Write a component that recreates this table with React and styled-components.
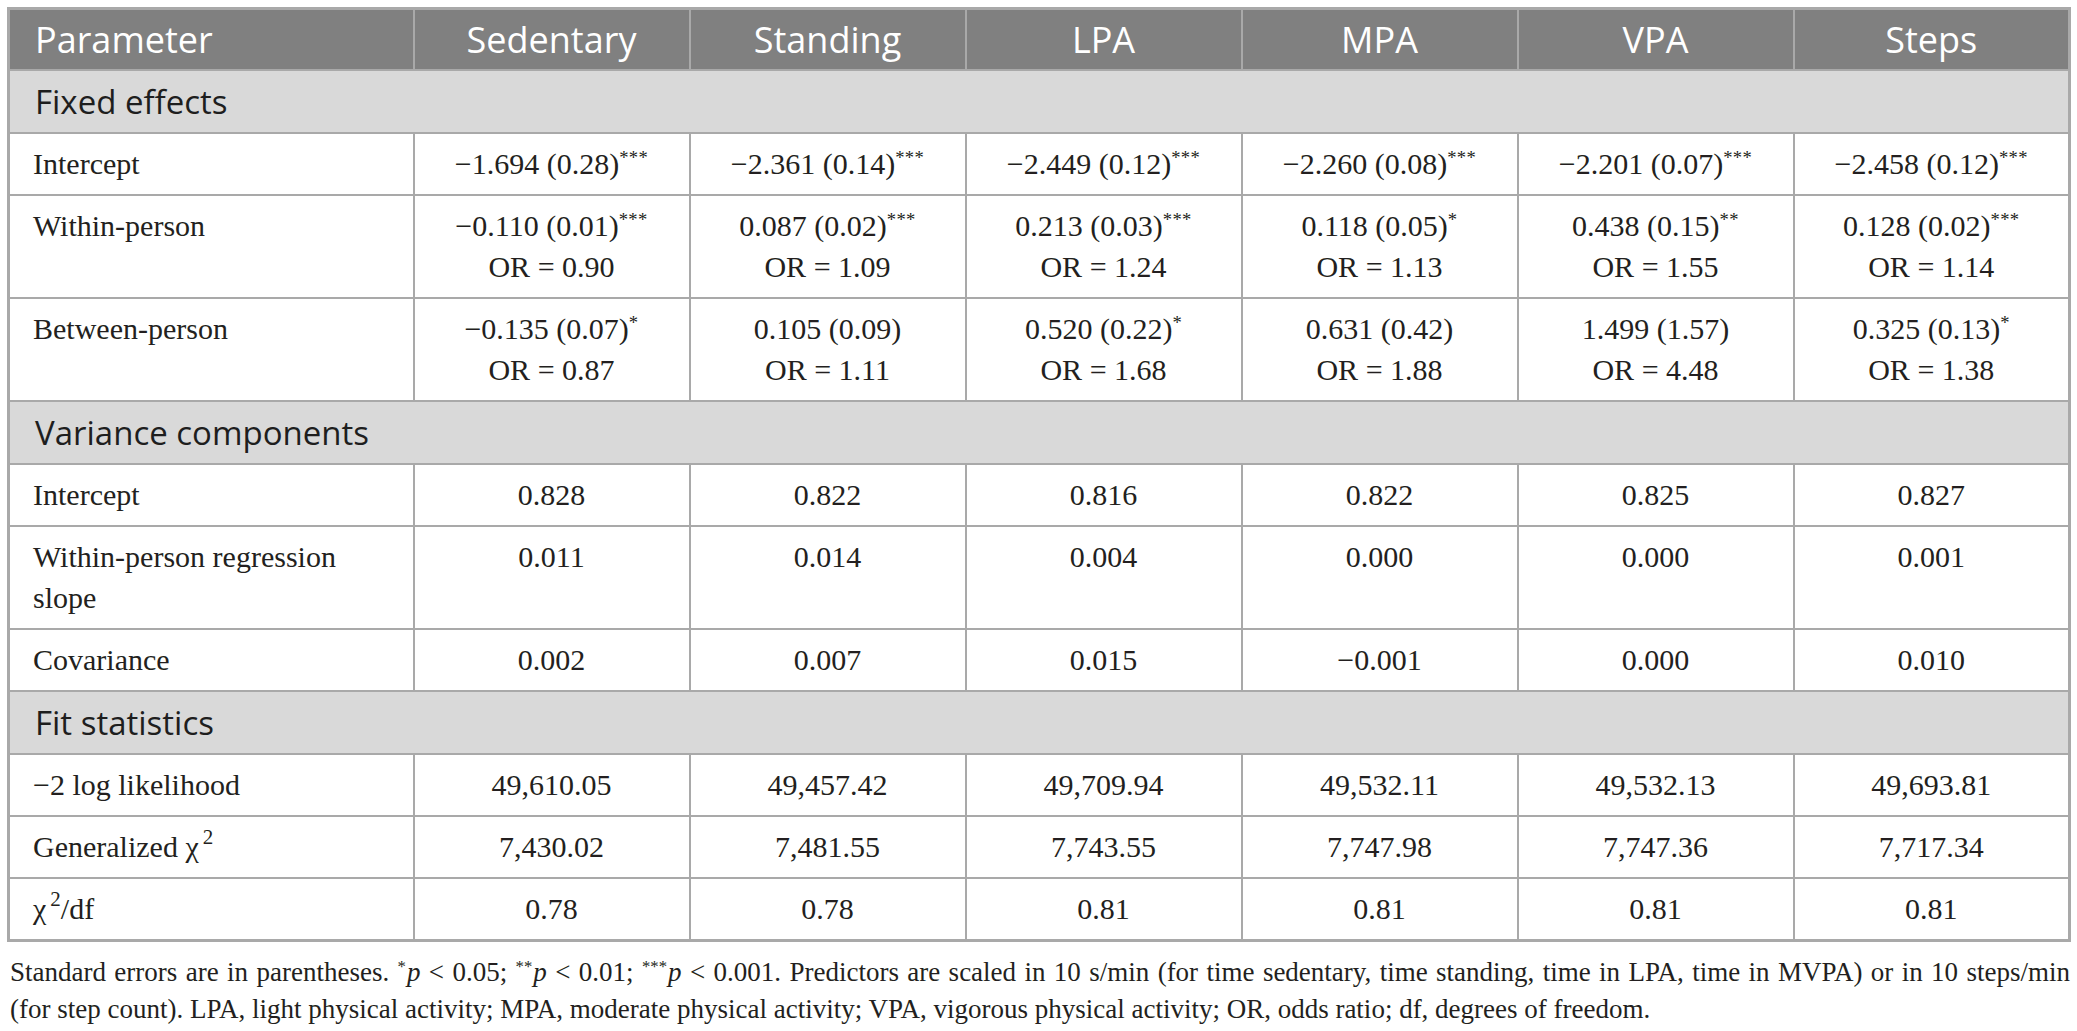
import React from "react";
import styled, { createGlobalStyle } from "styled-components";

const GlobalStyle = createGlobalStyle`
  html, body {
    margin: 0;
    padding: 0;
    background: #ffffff;
  }
`;

const Page = styled.div`
  width: 2077px;
  padding: 7px 7px 0 7px;
  box-sizing: border-box;
`;

const Table = styled.table`
  width: 2063px;
  border-collapse: collapse;
  table-layout: fixed;
  border: 3px solid #a9a9a9;
`;

const HeadCell = styled.th`
  background: #808080;
  color: #ffffff;
  font-family: "Open Sans", "Liberation Sans", sans-serif;
  font-weight: 400;
  font-size: 36px;
  line-height: 41px;
  padding: 9px 20px 9px ${(p) => (p.$first ? "25px" : "20px")};
  text-align: ${(p) => (p.$first ? "left" : "center")};
  border: 2px solid #a9a9a9;
  white-space: nowrap;
`;

const SectionCell = styled.td`
  background: #d9d9d9;
  color: #1e1e1e;
  font-family: "Open Sans", "Liberation Sans", sans-serif;
  font-size: 33px;
  line-height: 41px;
  padding: 10px 24px 10px 25px;
  border: 2px solid #a9a9a9;
`;

const BodyCell = styled.td`
  font-family: "Liberation Serif", "Times New Roman", serif;
  font-size: 30px;
  line-height: 41px;
  color: #231f20;
  padding: 9px 22px 10px;
  border: 2px solid #a9a9a9;
  vertical-align: top;
`;

const LabelCell = styled(BodyCell)`
  text-align: left;
  padding-left: 23px;
`;

const ValueCell = styled(BodyCell)`
  text-align: center;
  white-space: nowrap;
`;

const Stars = styled.sup`
  font-size: 0.62em;
  line-height: 0;
  vertical-align: 0.55em;
  letter-spacing: 0.02em;
`;

const ChiSup = styled.sup`
  font-size: 0.7em;
  line-height: 0;
  vertical-align: 0.6em;
  margin-left: 4px;
`;

const Footnote = styled.p`
  margin: 12px 0 0 0;
  padding: 0 0 0 3px;
  width: 2060px;
  font-family: "Liberation Serif", "Times New Roman", serif;
  font-size: 27px;
  line-height: 37px;
  color: #231f20;
  text-align: justify;
`;

const NoteStar = styled.sup`
  font-size: 0.62em;
  line-height: 0;
  vertical-align: 0.55em;
  margin-right: 1px;
`;

const columns = ["Sedentary", "Standing", "LPA", "MPA", "VPA", "Steps"];

const sections = [
  {
    title: "Fixed effects",
    rows: [
      {
        label: "Intercept",
        values: [
          ["−1.694 (0.28)", "***"],
          ["−2.361 (0.14)", "***"],
          ["−2.449 (0.12)", "***"],
          ["−2.260 (0.08)", "***"],
          ["−2.201 (0.07)", "***"],
          ["−2.458 (0.12)", "***"],
        ],
      },
      {
        label: "Within-person",
        values: [
          ["−0.110 (0.01)", "***", "OR = 0.90"],
          ["0.087 (0.02)", "***", "OR = 1.09"],
          ["0.213 (0.03)", "***", "OR = 1.24"],
          ["0.118 (0.05)", "*", "OR = 1.13"],
          ["0.438 (0.15)", "**", "OR = 1.55"],
          ["0.128 (0.02)", "***", "OR = 1.14"],
        ],
      },
      {
        label: "Between-person",
        values: [
          ["−0.135 (0.07)", "*", "OR = 0.87"],
          ["0.105 (0.09)", "", "OR = 1.11"],
          ["0.520 (0.22)", "*", "OR = 1.68"],
          ["0.631 (0.42)", "", "OR = 1.88"],
          ["1.499 (1.57)", "", "OR = 4.48"],
          ["0.325 (0.13)", "*", "OR = 1.38"],
        ],
      },
    ],
  },
  {
    title: "Variance components",
    rows: [
      { label: "Intercept", values: [["0.828"], ["0.822"], ["0.816"], ["0.822"], ["0.825"], ["0.827"]] },
      {
        label: "Within-person regression slope",
        values: [["0.011"], ["0.014"], ["0.004"], ["0.000"], ["0.000"], ["0.001"]],
      },
      { label: "Covariance", values: [["0.002"], ["0.007"], ["0.015"], ["−0.001"], ["0.000"], ["0.010"]] },
    ],
  },
  {
    title: "Fit statistics",
    rows: [
      {
        label: "−2 log likelihood",
        values: [["49,610.05"], ["49,457.42"], ["49,709.94"], ["49,532.11"], ["49,532.13"], ["49,693.81"]],
      },
      {
        label: (
          <>
            Generalized χ<ChiSup>2</ChiSup>
          </>
        ),
        values: [["7,430.02"], ["7,481.55"], ["7,743.55"], ["7,747.98"], ["7,747.36"], ["7,717.34"]],
      },
      {
        label: (
          <>
            χ<ChiSup>2</ChiSup>/df
          </>
        ),
        values: [["0.78"], ["0.78"], ["0.81"], ["0.81"], ["0.81"], ["0.81"]],
      },
    ],
  },
];

export default function App() {
  return (
    <Page>
      <GlobalStyle />
      <Table>
        <colgroup>
          <col style={{ width: 405 }} />
          {columns.map((c) => (
            <col key={c} style={{ width: 276 }} />
          ))}
        </colgroup>
        <thead>
          <tr>
            <HeadCell $first>Parameter</HeadCell>
            {columns.map((c) => (
              <HeadCell key={c}>{c}</HeadCell>
            ))}
          </tr>
        </thead>
        <tbody>
          {sections.map((section) => (
            <React.Fragment key={section.title}>
              <tr>
                <SectionCell colSpan={7}>{section.title}</SectionCell>
              </tr>
              {section.rows.map((row, i) => (
                <tr key={i}>
                  <LabelCell>{row.label}</LabelCell>
                  {row.values.map(([value, stars, odds], j) => (
                    <ValueCell key={j}>
                      {value}
                      {stars && <Stars>{stars}</Stars>}
                      {odds && (
                        <>
                          <br />
                          {odds}
                        </>
                      )}
                    </ValueCell>
                  ))}
                </tr>
              ))}
            </React.Fragment>
          ))}
        </tbody>
      </Table>
      <Footnote>
        Standard errors are in parentheses. <NoteStar>*</NoteStar>
        <i>p</i> &lt; 0.05; <NoteStar>**</NoteStar>
        <i>p</i> &lt; 0.01; <NoteStar>***</NoteStar>
        <i>p</i> &lt; 0.001. Predictors are scaled in 10 s/min (for time sedentary, time standing, time in LPA,
        time in MVPA) or in 10 steps/min (for{"\u00a0"}step count). LPA, light physical activity; MPA, moderate
        physical activity; VPA, vigorous physical activity; OR, odds ratio; df, degrees of freedom.
      </Footnote>
    </Page>
  );
}
